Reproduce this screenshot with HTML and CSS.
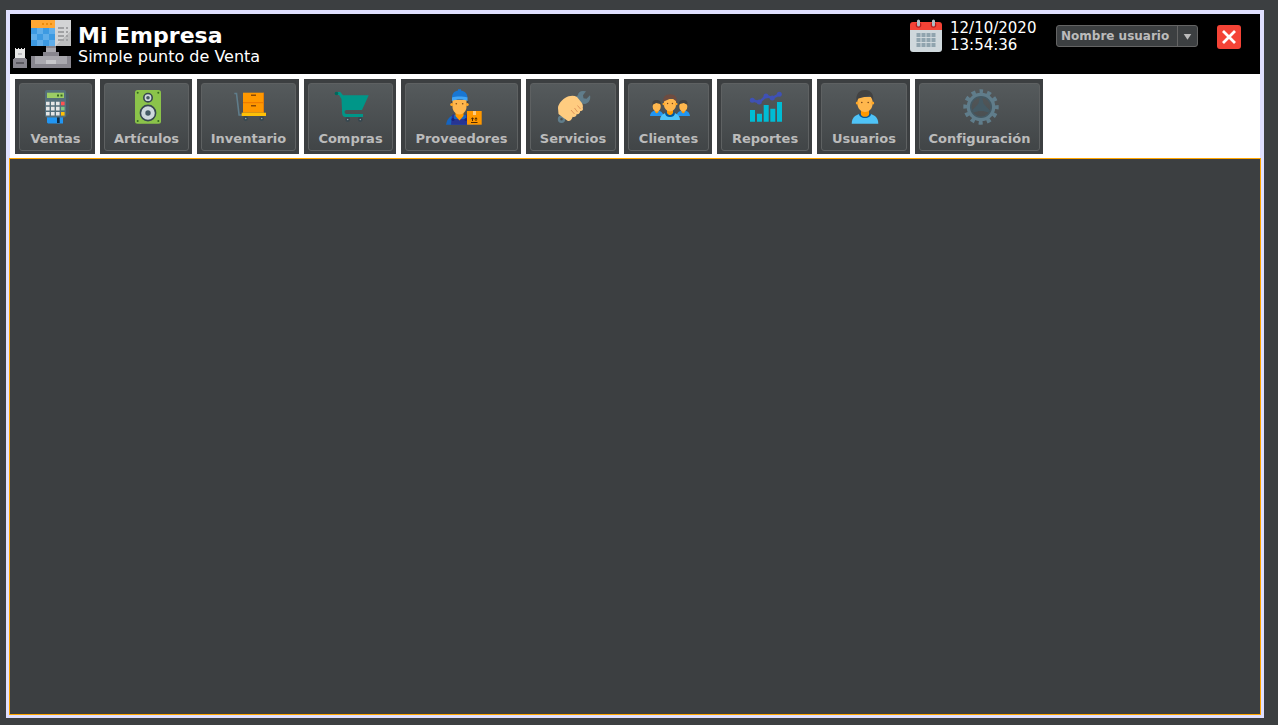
FILE: index.html
```html
<!DOCTYPE html>
<html lang="es">
<head>
<meta charset="utf-8">
<title>Mi Empresa</title>
<link rel="stylesheet" href="styles.css">
</head>
<body>
<div class="frame">
  <header class="header">
    <div class="brand">
      <svg class="logo" viewBox="0 0 58 48" aria-hidden="true" shape-rendering="crispEdges">
        <path fill="#e6e6e6" d="M2 28h1v1h2v-1h1v1h2v-1h1v1h2v-1h1v10H2z"/>
        <path fill="#bcbcc0" d="M5 33h4v2H5z"/>
        <path fill="#88868e" d="M1 38h12v1h1v9H0v-9h1z"/>
        <path fill="#5b5960" d="M3 42h8v2H3z"/>
        <path fill="#ffa733" d="M18 0h24v8H18z"/>
        <path fill="#ea8c0c" d="M29 3h2v2h-2zM33 3h2v2h-2zM37 3h2v2h-2z"/>
        <path fill="#3d9ae2" d="M18 8h24v18H18z"/>
        <path fill="#60aeea" d="M24 8h6v6h-6zM36 8h6v6h-6zM18 14h6v6h-6zM30 14h6v6h-6zM24 20h6v6h-6zM36 20h6v6h-6z"/>
        <path fill="#d3d4d5" d="M42 0h16v26H42z"/>
        <path fill="#bdbebf" d="M58 10v16H42z"/>
        <path fill="#a0a1a3" d="M45 7h6v2h-6zM53 7h2v2h-2zM45 11h6v2h-6zM53 11h2v2h-2zM45 15h6v2h-6zM53 15h2v2h-2zM45 19h6v2h-6zM53 19h2v2h-2z"/>
        <path fill="#a9a8ae" d="M33 26h10v6H33z"/>
        <path fill="#88868e" d="M33 26h10v2H33zM30 32h16v4H30zM18 36h40v12H18z"/>
        <path fill="#a9a8ae" d="M22 36h32v8H22z"/>
        <path fill="#c6c6c9" d="M33 40h10v4H33z"/>
      </svg>
      <div class="brand-text">
        <h1 class="company">Mi Empresa</h1>
        <p class="tagline">Simple punto de Venta</p>
      </div>
    </div>
    <div class="session">
      <svg class="calendar" viewBox="0 0 32 34" aria-hidden="true">
        <path fill="#cfd8dc" d="M0 10h32v20a3 3 0 0 1-3 3H3a3 3 0 0 1-3-3z"/>
        <path fill="#f44336" d="M0 11V6a3 3 0 0 1 3-3h26a3 3 0 0 1 3 3v5z"/>
        <circle cx="8.500" cy="6" r="2.800" fill="#b71c1c"/><circle cx="23.500" cy="6" r="2.800" fill="#b71c1c"/>
        <path stroke="#b0bec5" stroke-width="3" stroke-linecap="round" d="M8.500 2v4M23.500 2v4"/>
        <path fill="#90a4ae" d="M6.500 14h4v4h-4zM11.500 14h4v4h-4zM16.500 14h4v4h-4zM21.500 14h4v4h-4zM6.500 19h4v4h-4zM11.500 19h4v4h-4zM16.500 19h4v4h-4zM21.500 19h4v4h-4zM6.500 24h4v4h-4zM11.500 24h4v4h-4zM16.500 24h4v4h-4zM21.500 24h4v4h-4z"/>
      </svg>
      <div class="clock"><div>12/10/2020</div><div>13:54:36</div></div>
      <div class="user-menu">
        <select class="user-select" aria-label="Usuario"><option>Nombre usuario</option></select>
        <svg class="arrow" viewBox="0 0 20 20" aria-hidden="true"><path fill="#bbb" d="M6 8h8l-4 6z"/></svg>
      </div>
      <button class="close" type="button" aria-label="Cerrar">
        <svg viewBox="0 0 24 24" aria-hidden="true"><path stroke="#fff" stroke-width="2.800" d="M6 6l12 12M18 6L6 18"/></svg>
      </button>
    </div>
  </header>

  <nav class="toolbar">
    <button class="tool" type="button"><span class="face">
      <svg class="icon" viewBox="0 0 40 40" aria-hidden="true">
        <path fill="#455e6b" opacity=".6" d="M30 5l3 2v20l-3 3z"/>
        <path fill="#2196f3" d="M11 28h16v8.500H12l-1-1z"/><path fill="#0d2b45" d="M21 30h2.700v6H21z"/>
        <rect x="9" y="3" width="21" height="27.500" rx="2" fill="#546e7a"/>
        <path fill="#9ccc65" d="M11 5.700h17V11H11z"/><path fill="#33691e" d="M21 7.500h2v2h-2zM24.500 7.500h2v2h-2z"/>
        <path fill="#e6e6e6" d="M10 14.700h3.600v3.600H10zM15 14.700h3.600v3.600H15zM20 14.700h3.600v3.600H20zM10 19.800h3.600v3.600H10zM15 19.800h3.600v3.600H15zM20 19.800h3.600v3.600H20zM10 25h3.600v3.600H10zM15 25h3.600v3.600H15zM20 25h3.600v3.600H20z"/>
        <path fill="#ff5252" d="M25 14.700h3.600v3.600H25z"/><path fill="#81c784" d="M25 19.800h3.600v3.600H25z"/><path fill="#ffc107" d="M25 25h3.600v3.600H25z"/>
      </svg>Ventas</span></button>
    <button class="tool" type="button"><span class="face">
      <svg class="icon" viewBox="0 0 40 40" aria-hidden="true">
        <rect x="8" y="3" width="26" height="33.700" rx="2.500" fill="#8bc34a"/>
        <g fill="#33691e"><circle cx="10.700" cy="5.800" r="1"/><circle cx="31.300" cy="5.800" r="1"/><circle cx="10.700" cy="34" r="1"/><circle cx="31.300" cy="34" r="1"/></g>
        <circle cx="21" cy="10.700" r="4.200" fill="#cfd8dc" stroke="#37474f" stroke-width="1.600"/><circle cx="21" cy="10.700" r="1.800" fill="#455a64"/>
        <circle cx="21" cy="26" r="7.600" fill="#cfd8dc" stroke="#37474f" stroke-width="1.600"/><circle cx="21" cy="26" r="2.700" fill="#455a64"/>
      </svg>Artículos</span></button>
    <button class="tool" type="button"><span class="face">
      <svg class="icon" viewBox="0 0 40 40" aria-hidden="true">
        <path fill="none" stroke="#607d8b" stroke-width="1.600" d="M5.300 6.500h2.200l2.600 21.500h3"/>
        <path fill="#ff9800" d="M14 5.700h20.700v20H14z"/><path fill="#ef7b00" d="M14 15h20.700v1.300H14zM34 5.700h.7v20H34z"/>
        <path fill="#8b4a05" d="M22 7.500h5v1.600h-5zM22 18h5v1.600h-5z"/>
        <path fill="#ffc107" d="M12.700 25.700H37V29H12.700z"/>
        <g fill="#8fa7b3" stroke="#37474f" stroke-width="1.600"><circle cx="16.700" cy="31.500" r="1.600"/><circle cx="32.700" cy="31.500" r="1.600"/></g>
      </svg>Inventario</span></button>
    <button class="tool" type="button"><span class="face">
      <svg class="icon" viewBox="0 0 40 40" aria-hidden="true">
        <path fill="#009688" d="M5 5h4.300l2.700 3.300h25.700L31 23H15.500a2 2 0 0 0 0 4H32v3H14.500c-2 0-3-1-3.300-3L10.500 12 8 8H5z"/>
        <circle cx="5.500" cy="6.500" r="1.800" fill="#00695c"/>
        <g fill="#90a4ae" stroke="#37474f" stroke-width="1.700"><circle cx="16.700" cy="32.500" r="1.600"/><circle cx="29.300" cy="32.500" r="1.600"/></g>
      </svg>Compras</span></button>
    <button class="tool" type="button"><span class="face">
      <svg class="icon" viewBox="0 0 40 40" aria-hidden="true">
        <path fill="#424242" d="M9 14h17.500v5H9z"/>
        <path fill="#1565c0" d="M4 37.700c1-6 4-9 9-10h9c5 1 8 4 9 10z"/>
        <path fill="#283593" d="M10 28l2-1v5h12v-5l2 1v9.700H9z"/>
        <path fill="#ff9800" d="M13.500 24h8v5l-4 4.500-4-4.500z"/>
        <path fill="#ffb74d" d="M10.500 13h14v7c0 4-3.500 7.500-7 7.500s-7-3.500-7-7.500z"/><circle cx="9.800" cy="17.500" r="1.600" fill="#ffa726"/><circle cx="25.200" cy="17.500" r="1.600" fill="#ffa726"/>
        <circle cx="14.300" cy="16.700" r=".8" fill="#784719"/><circle cx="20.700" cy="16.700" r=".8" fill="#784719"/>
        <path fill="#1976d2" d="M10 11c0-5 3-7 6-7.500V2.300h3v1.200c3 .5 6.500 2.500 6.500 7.500z"/>
        <path fill="#42a5f5" d="M10 10.500c4-1.300 11-1.300 15.500 0v3.500c-4-2-11-2-15.500 0z"/>
        <circle cx="11" cy="32.500" r="1.500" fill="#1a237e"/><circle cx="24" cy="32.500" r="1.500" fill="#1a237e"/>
        <path fill="#ff9800" d="M25 24h14.700v13.700H25z"/><path fill="#ffcc80" d="M31 24h3v4h-3z"/>
        <path fill="none" stroke="#4e2a04" stroke-width="1" d="M29 35.500h6.500M30.500 34v-3M34 34v-3M29.300 32.200l1.200-1.500 1.200 1.500M32.800 32.200l1.200-1.500 1.200 1.500"/>
      </svg>Proveedores</span></button>
    <button class="tool" type="button"><span class="face">
      <svg class="icon" viewBox="0 0 40 40" aria-hidden="true">
        <path fill="#607d8b" d="M22 11l3-3c0-2 2-4 5-4l3 .3-3 4 .5 3 3 .5 3.500-3.500c1 4-1 8-5 8.700l-4-.5-5 4z"/>
        <circle cx="8.500" cy="32.300" r="2.500" fill="none" stroke="#607d8b" stroke-width="2.400"/>
        <path fill="#ffcc80" d="M5 21c0-3 3-7.500 7-10 4-2.500 9-2.800 12-1l4.500 5.500c1.200 1.500 1.800 3.500 1.200 5.500 1 1.500-.5 3.500-2.500 3 0 2.500-2 3.700-3.500 3 0 2.500-2.500 3.600-4 2.700-1 3.500-3.500 5.300-5.500 3.800L10 30.500 5.500 27z"/>
        <path fill="none" stroke="#e0955b" d="M18 23l3.500 4M21.500 21l3 4M24.500 18.500l3 3.500"/>
      </svg>Servicios</span></button>
    <button class="tool" type="button"><span class="face">
      <svg class="icon" viewBox="0 0 40 40" aria-hidden="true">
        <path fill="#2196f3" d="M1 29c.5-4 3-5.500 6.500-5.500S14 25 14.500 29zM41 29c-.5-4-3-5.500-6.500-5.500S28 25 27.500 29z"/>
        <path fill="#ff9800" d="M6 22h3.500v3l-1.700 1.500L6 25zM32.500 22H36v3l-1.800 1.500-1.700-1.500z"/>
        <path fill="#ffb74d" d="M3.700 16h8v4c0 2.500-2 4.500-4 4.500s-4-2-4-4.500zM30.300 16h8v4c0 2.500-2 4.500-4 4.500s-4-2-4-4.500z"/>
        <path fill="#424242" d="M3.200 19c-.5-5 1.500-6 4.500-6s5 2 4.500 6l-1-2-4-1-3 1.500zM38.800 19c.5-5-1.500-6-4.500-6s-5 2-4.500 6l1-2 4-1 3 1.500z"/>
        <path fill="#4fc3f7" d="M11 33c0-5 4-7.500 10-7.500S31 28 31 33z"/><path fill="#01579b" d="M16 25.500h10c0 3-2 4.500-5 4.500s-5-1.500-5-4.500z"/>
        <path fill="#ff9800" d="M18 21h6v5c-.7 1.500-2 2-3 2s-2.300-.5-3-2z"/><path fill="#ffb74d" d="M15 12h12v6c0 3.500-3 6.500-6 6.500s-6-3-6-6.500z"/><circle cx="14.800" cy="17" r="1.300" fill="#ffa726"/><circle cx="27.200" cy="17" r="1.300" fill="#ffa726"/>
        <circle cx="18.600" cy="16.500" r=".7" fill="#784719"/><circle cx="23.400" cy="16.500" r=".7" fill="#784719"/>
        <path fill="#6d4c41" d="M14.300 16c-1-6 2-8.800 7-8.800 4.500 0 7.500 2.800 6.500 8.800l-1-2-4-3-7.500 3.300z"/>
      </svg>Clientes</span></button>
    <button class="tool" type="button"><span class="face">
      <svg class="icon" viewBox="0 0 40 40" aria-hidden="true">
        <path fill="#00bcd4" d="M5 23h5v11.700H5zM12 26.700h5v8h-5zM18.700 18h5v16.700h-5zM25.300 21.700h5v13h-5zM32 15h5v19.700h-5z"/>
        <path fill="none" stroke="#3f51b5" stroke-width="2.500" d="M7.300 13.300l7 2 6.700-6.300 6.300 2 7-3.700"/>
        <g fill="#3f51b5"><circle cx="7.300" cy="13.300" r="2.500"/><circle cx="14.300" cy="15" r="2.500"/><circle cx="21" cy="9" r="2.500"/><circle cx="27.300" cy="11" r="2.500"/><circle cx="34.300" cy="7.300" r="2.500"/></g>
      </svg>Reportes</span></button>
    <button class="tool" type="button"><span class="face">
      <svg class="icon" viewBox="0 0 40 40" aria-hidden="true">
        <path fill="#4fc3f7" d="M7.700 36.700c0-7 4.500-10.200 13.300-10.200s13.300 3.200 13.300 10.200z"/><path fill="#01579b" d="M15 26.700h12c0 2.500-2.500 4.300-6 4.300s-6-1.800-6-4.300z"/>
        <path fill="#ff9800" d="M17 22h8v6c-1 1.300-2.500 1.800-4 1.800s-3-.5-4-1.800z"/>
        <path fill="#ffb74d" d="M13.500 10h15v7.500c0 4-3.700 7.500-7.500 7.500s-7.500-3.500-7.500-7.500z"/><circle cx="13.300" cy="16" r="1.500" fill="#ffa726"/><circle cx="28.700" cy="16" r="1.500" fill="#ffa726"/>
        <circle cx="17.800" cy="15.500" r=".8" fill="#784719"/><circle cx="24.200" cy="15.500" r=".8" fill="#784719"/>
        <path fill="#424242" d="M12.500 14.500C11.500 6 16 3 21 3c6 0 9 4 8.300 11.500L28 12l-2-3.500-11.500 3z"/>
      </svg>Usuarios</span></button>
    <button class="tool" type="button"><span class="face">
      <svg class="icon" viewBox="0 0 40 40" aria-hidden="true">
        <circle cx="21" cy="20" r="15.600" fill="none" stroke="#607d8b" stroke-width="4.200" stroke-dasharray="4.080 4.088" stroke-dashoffset="2.040" transform="rotate(-90 21 20)"/>
        <circle cx="21" cy="20" r="12.300" fill="none" stroke="#607d8b" stroke-width="4"/>
        <circle cx="21" cy="20" r="10.300" fill="none" stroke="#455a64" stroke-width="1.500"/>
        <path fill="#455a64" d="M19.800 10h2.400l1.300 6.500 6.500 7-1.500 2-5.500-1.500h-4L13.500 25.500l-1.500-2 6.500-7z"/>
      </svg>Configuración</span></button>
  </nav>

  <main class="workspace"></main>
</div>
</body>
</html>
```
FILE: styles.css
```css
* {
  box-sizing: border-box;
}

body {
  margin: 0;
  background: #3c3f41;
  font-family: "DejaVu Sans", sans-serif;
}

.frame {
  display: flex;
  flex-direction: column;
  min-height: calc(100vh - 17px);
  margin: 10px 14px 7px 6px;
  border: 4px solid #e0e0ff;
}

.header {
  display: flex;
  justify-content: space-between;
  height: 60px;
  padding: 5px 19px 5px 3px;
  background: #000;
  color: #fff;
}

.brand {
  display: flex;
  gap: 7px;
  padding-top: 1px;
}

.logo {
  width: 58px;
  height: 48px;
}

.company {
  margin: 0;
  padding-top: 3px;
  font-size: 22px;
  line-height: 25px;
}

.tagline {
  margin: 0;
  font-size: 16px;
  line-height: 18px;
}

.session {
  display: flex;
  align-items: flex-start;
}

.calendar {
  width: 32px;
  height: 34px;
  margin-right: 8px;
}

.clock {
  min-width: 90px;
  margin-right: 16px;
  padding-top: 1px;
  font-size: 15px;
  line-height: 17px;
}

.user-menu {
  position: relative;
  width: 142px;
  height: 22px;
  margin: 6px 19px 0 0;
}

.user-select {
  appearance: none;
  display: block;
  width: 100%;
  height: 100%;
  padding: 0 20px 1px 4px;
  border: 1px solid #646464;
  border-radius: 3px;
  background: #3c3f41;
  color: #bbb;
  font: bold 12px "DejaVu Sans", sans-serif;
}

.arrow {
  position: absolute;
  top: 1px;
  right: 1px;
  width: 20px;
  height: 20px;
  border-left: 1px solid #646464;
  pointer-events: none;
}

.close {
  width: 24px;
  height: 24px;
  margin-top: 6px;
  padding: 0;
  border: 0;
  border-radius: 3px;
  background: #f44336;
}

.close svg {
  display: block;
}

.toolbar {
  display: grid;
  grid-template-columns: 80px 92px 102px 92px 120px 93px 88px 95px 93px 128px;
  gap: 5px;
  padding: 5px 5px 4px;
  background: #fff;
}

.tool {
  height: 75px;
  padding: 4px 3px 3px 4px;
  border: 0;
  background: #3c3f41;
  color: #bbb;
  font: bold 13px "DejaVu Sans", sans-serif;
}

.face {
  display: flex;
  flex-direction: column;
  align-items: center;
  height: 100%;
  padding-top: 3px;
  border: 1px solid #5e6162;
  border-radius: 3px;
  background: linear-gradient(#555a5c, #414547);
  line-height: 23px;
}

.icon {
  flex: none;
  width: 40px;
  height: 40px;
  overflow: visible;
}

.workspace {
  flex: 1;
  margin: 0 -1px -1px;
  border: 1px solid #ffa500;
  background: #3c3f41;
}
```
